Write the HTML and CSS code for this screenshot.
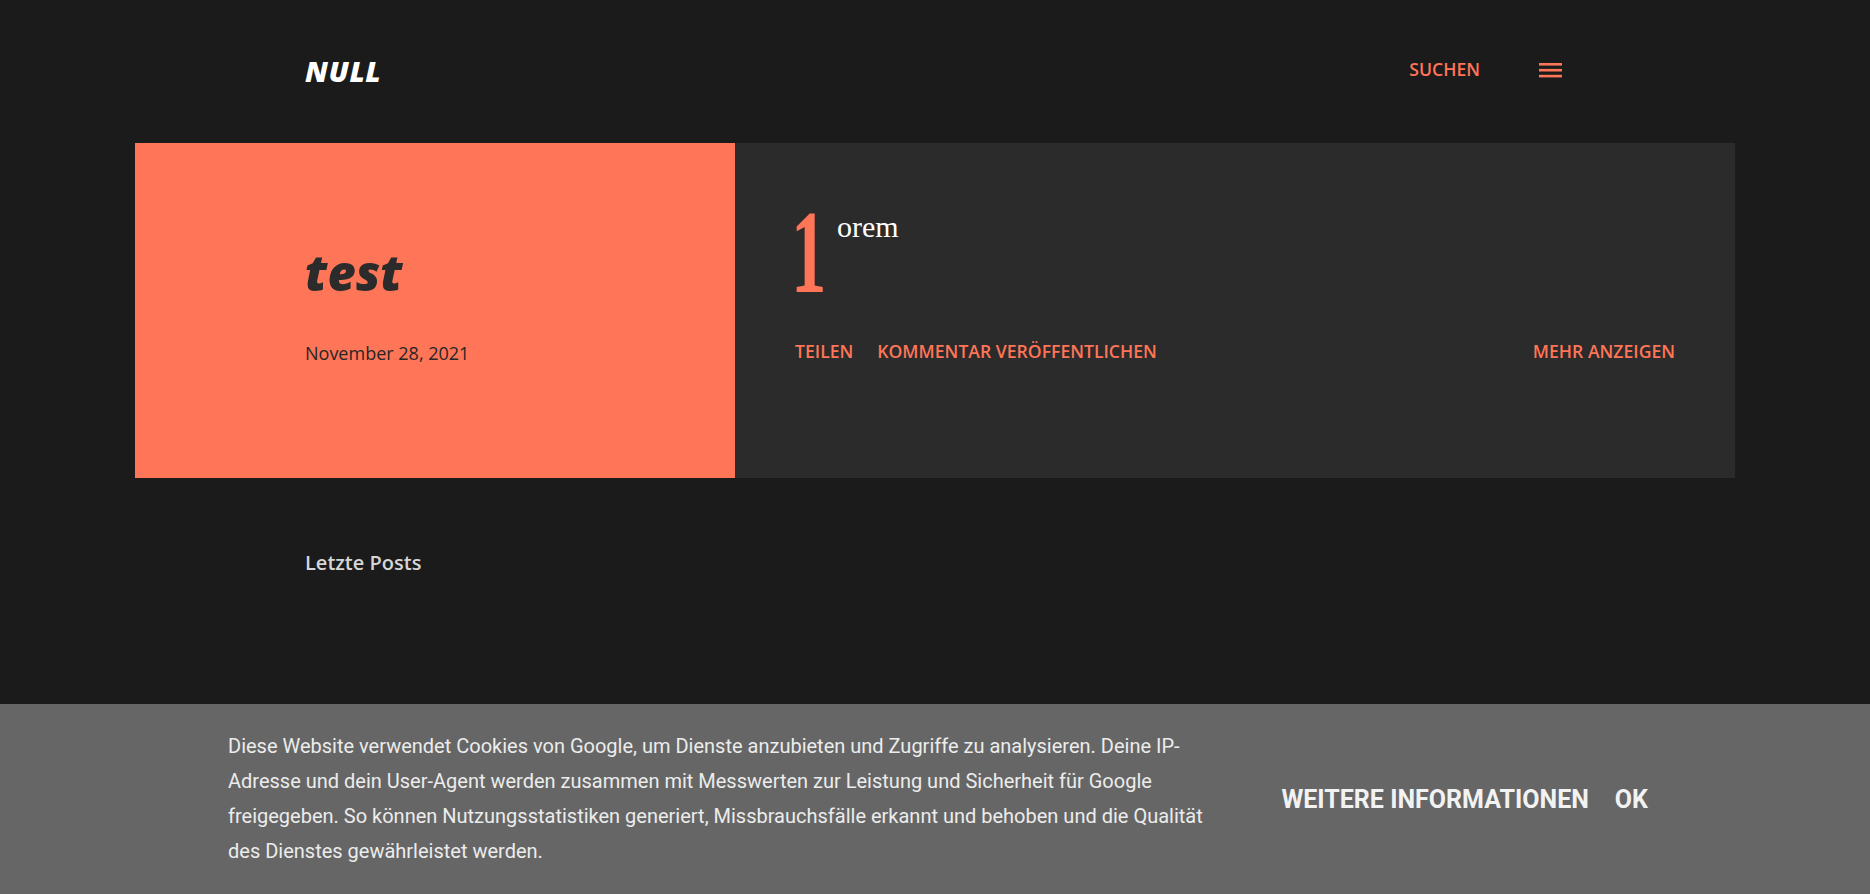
FILE: index.html
```html
<!DOCTYPE html>
<html lang="de">
<head>
<meta charset="utf-8">
<title>NULL</title>
<link rel="stylesheet" href="styles.css">
</head>
<body>
<header class="site-header">
  <div class="container header-inner">
    <h1 class="logo">NULL</h1>
    <nav class="header-actions">
      <a class="search-link" href="#">SUCHEN</a>
      <button class="menu-btn" aria-label="Menü">
        <svg width="23" height="15" viewBox="0 0 23 15"><rect x="0" y="0" width="23" height="2.6" fill="currentColor"/><rect x="0" y="5.9" width="23" height="2.6" fill="currentColor"/><rect x="0" y="11.8" width="23" height="2.6" fill="currentColor"/></svg>
      </button>
    </nav>
  </div>
</header>
<main>
  <article class="post">
    <div class="post-head">
      <h2 class="post-title">test</h2>
      <div class="post-date">November 28, 2021</div>
    </div>
    <div class="post-body">
      <p class="snippet"><span class="dropcap">1</span>orem</p>
      <div class="post-actions">
        <a href="#" class="action">TEILEN</a>
        <a href="#" class="action">KOMMENTAR VERÖFFENTLICHEN</a>
        <a href="#" class="action more">MEHR ANZEIGEN</a>
      </div>
    </div>
  </article>
  <section class="container recent">
    <h3 class="recent-title">Letzte Posts</h3>
  </section>
</main>
<div class="cookie-bar">
  <p class="cookie-text">Diese Website verwendet Cookies von Google, um Dienste anzubieten und Zugriffe zu analysieren. Deine IP-Adresse und dein User-Agent werden zusammen mit Messwerten zur Leistung und Sicherheit für Google freigegeben. So können Nutzungsstatistiken generiert, Missbrauchsfälle erkannt und behoben und die Qualität des Dienstes gewährleistet werden.</p>
  <div class="cookie-buttons">
    <a href="#" class="cookie-btn">Weitere Informationen</a>
    <a href="#" class="cookie-btn">OK</a>
  </div>
</div>
</body>
</html>
```
FILE: styles.css
```css
* { box-sizing: border-box; }
html, body { margin: 0; padding: 0; }
body {
  background: #1b1b1b;
  font-family: "Open Sans", "Liberation Sans", sans-serif;
  min-height: 894px;
}
a { text-decoration: none; }

.container {
  width: 1260px;
  margin: 0 auto;
}

.site-header { height: 140px; }
.header-inner {
  height: 100%;
  display: flex;
  align-items: center;
  justify-content: space-between;
}
.logo {
  margin: 0;
  font-size: 29px;
  letter-spacing: 0.6px;
  line-height: 1;
  font-weight: 800;
  font-style: italic;
  color: #ffffff;
}
.header-actions {
  display: flex;
  align-items: center;
  gap: 55px;
}
.search-link {
  color: #ff7557;
  font-size: 17.6px;
  font-weight: 600;
  line-height: 1;
}
.menu-btn {
  width: 30px;
  height: 30px;
  padding: 0;
  border: 0;
  background: transparent;
  color: #ff7557;
  display: flex;
  align-items: center;
  justify-content: center;
}
.menu-btn svg { display: block; }

.post {
  width: 1600px;
  height: 335px;
  margin: 3px auto 0;
  display: flex;
}
.post-head {
  width: 600px;
  background: #ff7557;
  padding: 100px 40px 0 170px;
}
.post-title {
  margin: 0;
  font-size: 49px;
  line-height: 1.2;
  font-weight: 800;
  font-style: italic;
  color: #2b2b2b;
}
.post-date {
  margin-top: 39px;
  font-size: 18px;
  line-height: 24px;
  color: #262626;
}
.post-body {
  flex: 1;
  background: #2b2b2b;
  padding: 66px 60px 0;
}
.snippet {
  display: flow-root;
  margin: 0;
  font-family: "Liberation Serif", serif;
  font-size: 30px;
  line-height: 36px;
  color: #ffffff;
}
.dropcap {
  float: left;
  font-size: 118px;
  font-weight: 700;
  line-height: 0.8;
  color: #ff7557;
  margin: -3px -13px 0 -4px;
  transform: scaleX(0.6);
  transform-origin: left top;
}
.post-actions {
  margin-top: 39px;
  display: flex;
  gap: 24px;
}
.action {
  color: #ff7557;
  font-size: 17.6px;
  font-weight: 600;
  line-height: 24px;
}
.action.more { margin-left: auto; }

.recent { margin-top: 71px; }
.recent-title {
  margin: 0;
  font-size: 20px;
  line-height: 28px;
  font-weight: 600;
  color: #d6d6d6;
}

.cookie-bar {
  position: fixed;
  left: 0;
  right: 0;
  bottom: 0;
  height: 190px;
  background: #666666;
  display: flex;
  align-items: center;
  justify-content: space-between;
  padding: 0 222px 0 228px;
  font-family: Roboto, "Liberation Sans", sans-serif;
}
.cookie-text {
  margin: 0;
  width: 1000px;
  font-size: 20px;
  line-height: 35px;
  color: #ececec;
}
.cookie-buttons {
  display: flex;
  gap: 26px;
}
.cookie-btn {
  font-size: 25px;
  font-weight: 700;
  text-transform: uppercase;
  color: #f2f2f2;
  line-height: 1;
}
```
